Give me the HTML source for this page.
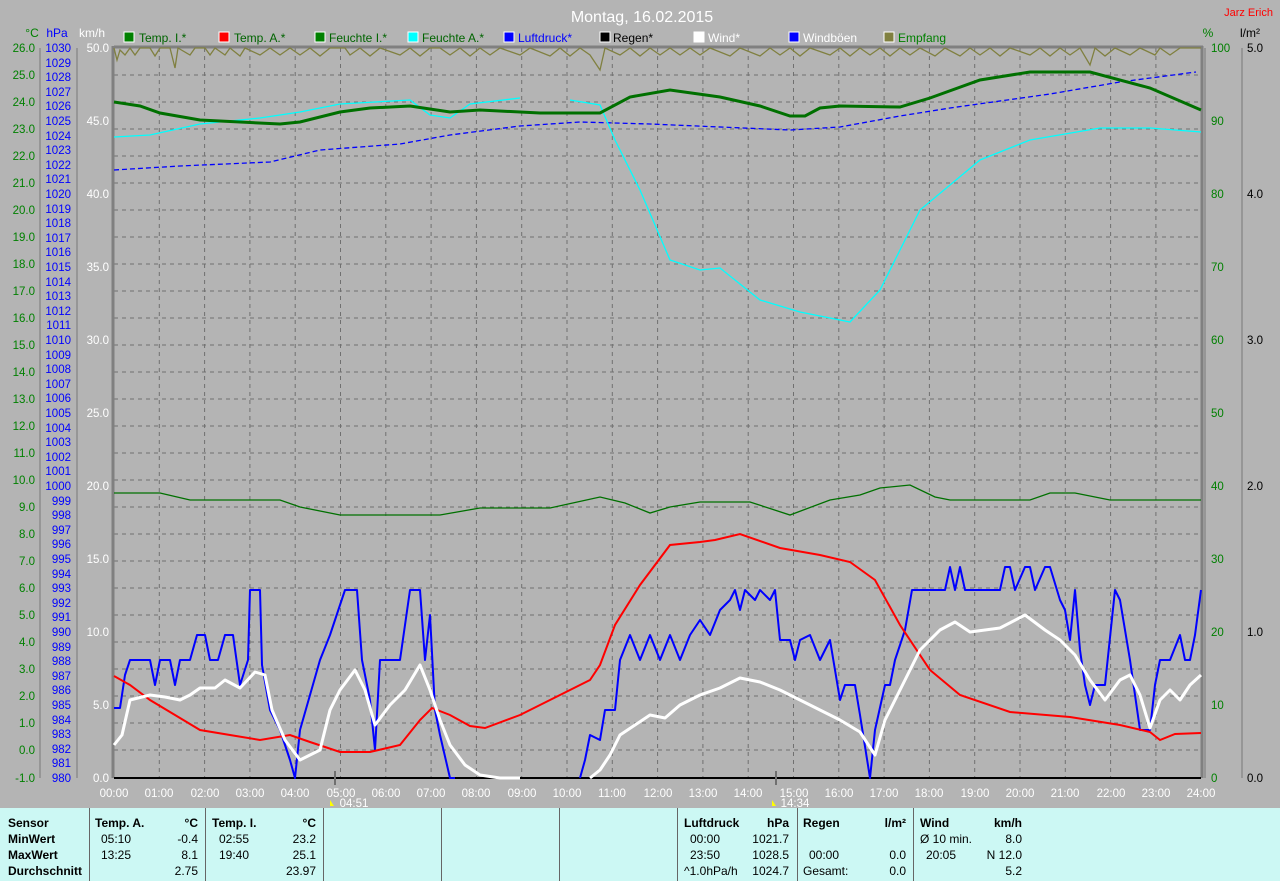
<!DOCTYPE html>
<html><head><meta charset="utf-8"><style>
html,body{margin:0;padding:0;background:#b4b4b4;}
body{width:1280px;height:881px;overflow:hidden;position:relative;font-family:"Liberation Sans",sans-serif;}
svg{position:absolute;left:0;top:0;}
.panel{position:absolute;left:0;top:808px;width:1280px;height:73px;background:#ccf8f4;}
.c{position:absolute;font-size:12px;color:#000;white-space:nowrap;}
.b{font-weight:bold;}
.r{text-align:right;}
.d{position:absolute;top:0;width:1px;height:73px;background:#666;}
</style></head><body>
<svg width="1280" height="808" xmlns="http://www.w3.org/2000/svg" font-family="Liberation Sans, sans-serif">
<text x="642" y="22" font-size="16" fill="#fff" text-anchor="middle">Montag, 16.02.2015</text>
<text x="1273" y="16" font-size="11" fill="#f00" text-anchor="end">Jarz Erich</text>
<g font-size="12">
<rect x="124" y="32" width="10" height="10" fill="#008000" stroke="#fff"/><text x="139" y="42" fill="#006400">Temp. I.*</text>
<rect x="219" y="32" width="10" height="10" fill="#f00" stroke="#fff"/><text x="234" y="42" fill="#006400">Temp. A.*</text>
<rect x="315" y="32" width="10" height="10" fill="#008000" stroke="#fff"/><text x="329" y="42" fill="#006400">Feuchte I.*</text>
<rect x="408" y="32" width="10" height="10" fill="#0ff" stroke="#fff"/><text x="422" y="42" fill="#006400">Feuchte A.*</text>
<rect x="504" y="32" width="10" height="10" fill="#00f" stroke="#fff"/><text x="518" y="42" fill="#00f">Luftdruck*</text>
<rect x="600" y="32" width="10" height="10" fill="#000" stroke="#fff"/><text x="613" y="42" fill="#000">Regen*</text>
<rect x="694" y="32" width="10" height="10" fill="#fff" stroke="#fff"/><text x="708" y="42" fill="#fff">Wind*</text>
<rect x="789" y="32" width="10" height="10" fill="#00f" stroke="#fff"/><text x="803" y="42" fill="#fff">Windböen</text>
<rect x="884" y="32" width="10" height="10" fill="#808040" stroke="#fff"/><text x="898" y="42" fill="#008000">Empfang</text>
</g>
<g font-size="12">
<text x="32" y="37" fill="#008000" text-anchor="middle">°C</text>
<text x="57" y="37" fill="#00f" text-anchor="middle">hPa</text>
<text x="92" y="37" fill="#fff" text-anchor="middle">km/h</text>
<text x="1208" y="37" fill="#008000" text-anchor="middle">%</text>
<text x="1250" y="37" fill="#000" text-anchor="middle">l/m²</text>
</g>
<!-- grid -->
<g stroke="#707070" stroke-dasharray="4,4" stroke-width="1">
<path d="M114 75H1201M114 102H1201M114 129H1201M114 156H1201M114 183H1201M114 210H1201M114 237H1201M114 264H1201M114 291H1201M114 318H1201M114 345H1201M114 372H1201M114 399H1201M114 426H1201M114 453H1201M114 480H1201M114 507H1201M114 534H1201M114 561H1201M114 588H1201M114 615H1201M114 642H1201M114 669H1201M114 696H1201M114 723H1201M114 750H1201"/>
<path d="M159.3 48V778M204.6 48V778M249.9 48V778M295.2 48V778M340.5 48V778M385.8 48V778M431.1 48V778M476.4 48V778M521.7 48V778M567 48V778M612.3 48V778M657.6 48V778M702.9 48V778M748.2 48V778M793.5 48V778M838.8 48V778M884.1 48V778M929.4 48V778M974.7 48V778M1020 48V778M1065.3 48V778M1110.6 48V778M1155.9 48V778"/>
</g>
<!-- axes -->
<path d="M40 48V778M77 48V778M1205 48V778M1242 48V778" stroke="#777" fill="none"/>
<path d="M113 46V778M114 47H1203M1202 46V778" stroke="#808080" stroke-width="3" fill="none"/>
<path d="M114 778H1201" stroke="#000" stroke-width="2"/>
<path d="M335 771V785M776 771V785" stroke="#707070" stroke-width="2"/>
<!-- left °C ticks & labels -->
<g font-size="11.5" fill="#008000" text-anchor="end">
<text x="35" y="52">26.0</text><text x="35" y="79">25.0</text><text x="35" y="106">24.0</text><text x="35" y="133">23.0</text><text x="35" y="160">22.0</text><text x="35" y="187">21.0</text><text x="35" y="214">20.0</text><text x="35" y="241">19.0</text><text x="35" y="268">18.0</text><text x="35" y="295">17.0</text><text x="35" y="322">16.0</text><text x="35" y="349">15.0</text><text x="35" y="376">14.0</text><text x="35" y="403">13.0</text><text x="35" y="430">12.0</text><text x="35" y="457">11.0</text><text x="35" y="484">10.0</text><text x="35" y="511">9.0</text><text x="35" y="538">8.0</text><text x="35" y="565">7.0</text><text x="35" y="592">6.0</text><text x="35" y="619">5.0</text><text x="35" y="646">4.0</text><text x="35" y="673">3.0</text><text x="35" y="700">2.0</text><text x="35" y="727">1.0</text><text x="35" y="754">0.0</text><text x="35" y="782">-1.0</text>
</g>
<g font-size="11.5" fill="#00f" text-anchor="end">
<text x="71" y="52">1030</text><text x="71" y="67">1029</text><text x="71" y="81">1028</text><text x="71" y="96">1027</text><text x="71" y="110">1026</text><text x="71" y="125">1025</text><text x="71" y="140">1024</text><text x="71" y="154">1023</text><text x="71" y="169">1022</text><text x="71" y="183">1021</text><text x="71" y="198">1020</text><text x="71" y="213">1019</text><text x="71" y="227">1018</text><text x="71" y="242">1017</text><text x="71" y="256">1016</text><text x="71" y="271">1015</text><text x="71" y="286">1014</text><text x="71" y="300">1013</text><text x="71" y="315">1012</text><text x="71" y="329">1011</text><text x="71" y="344">1010</text><text x="71" y="359">1009</text><text x="71" y="373">1008</text><text x="71" y="388">1007</text><text x="71" y="402">1006</text><text x="71" y="417">1005</text><text x="71" y="432">1004</text><text x="71" y="446">1003</text><text x="71" y="461">1002</text><text x="71" y="475">1001</text><text x="71" y="490">1000</text><text x="71" y="505">999</text><text x="71" y="519">998</text><text x="71" y="534">997</text><text x="71" y="548">996</text><text x="71" y="563">995</text><text x="71" y="578">994</text><text x="71" y="592">993</text><text x="71" y="607">992</text><text x="71" y="621">991</text><text x="71" y="636">990</text><text x="71" y="651">989</text><text x="71" y="665">988</text><text x="71" y="680">987</text><text x="71" y="694">986</text><text x="71" y="709">985</text><text x="71" y="724">984</text><text x="71" y="738">983</text><text x="71" y="753">982</text><text x="71" y="767">981</text><text x="71" y="782">980</text>
</g>
<g font-size="11.5" fill="#fff" text-anchor="end">
<text x="109" y="52">50.0</text><text x="109" y="125">45.0</text><text x="109" y="198">40.0</text><text x="109" y="271">35.0</text><text x="109" y="344">30.0</text><text x="109" y="417">25.0</text><text x="109" y="490">20.0</text><text x="109" y="563">15.0</text><text x="109" y="636">10.0</text><text x="109" y="709">5.0</text><text x="109" y="782">0.0</text>
</g>
<g font-size="11.5" fill="#008000">
<text x="1211" y="52">100</text><text x="1211" y="125">90</text><text x="1211" y="198">80</text><text x="1211" y="271">70</text><text x="1211" y="344">60</text><text x="1211" y="417">50</text><text x="1211" y="490">40</text><text x="1211" y="563">30</text><text x="1211" y="636">20</text><text x="1211" y="709">10</text><text x="1211" y="782">0</text>
</g>
<g font-size="11.5" fill="#000">
<text x="1247" y="52">5.0</text><text x="1247" y="198">4.0</text><text x="1247" y="344">3.0</text><text x="1247" y="490">2.0</text><text x="1247" y="636">1.0</text><text x="1247" y="782">0.0</text>
</g>
<g font-size="11.5" fill="#fff" text-anchor="middle">
<text x="114" y="797">00:00</text><text x="159" y="797">01:00</text><text x="205" y="797">02:00</text><text x="250" y="797">03:00</text><text x="295" y="797">04:00</text><text x="341" y="797">05:00</text><text x="386" y="797">06:00</text><text x="431" y="797">07:00</text><text x="476" y="797">08:00</text><text x="522" y="797">09:00</text><text x="567" y="797">10:00</text><text x="612" y="797">11:00</text><text x="658" y="797">12:00</text><text x="703" y="797">13:00</text><text x="748" y="797">14:00</text><text x="794" y="797">15:00</text><text x="839" y="797">16:00</text><text x="884" y="797">17:00</text><text x="929" y="797">18:00</text><text x="975" y="797">19:00</text><text x="1020" y="797">20:00</text><text x="1065" y="797">21:00</text><text x="1111" y="797">22:00</text><text x="1156" y="797">23:00</text><text x="1201" y="797">24:00</text>
<text x="354" y="807">04:51</text><text x="795" y="807">14:34</text>
</g>
<path d="M330 800l4 6h-4z" fill="#ff0"/><path d="M772 800l4 6h-4z" fill="#ff0"/>
<!-- Empfang -->
<polyline fill="none" stroke="#808040" stroke-width="1.3" points="114,48 117,60 120,50 125,55 130,48 135,55 140,48 150,48 155,56 160,48 170,48 175,68 178,48 190,55 195,48 205,48 210,55 215,48 225,55 230,48 240,56 245,48 260,55 270,48 280,55 290,48 300,55 310,48 320,56 330,48 345,48 350,55 360,48 370,56 380,48 400,55 410,48 420,56 430,48 440,48 450,55 460,48 470,56 480,48 490,55 500,48 520,55 530,48 550,56 560,48 570,56 580,48 590,55 600,70 605,48 620,55 630,48 640,56 650,48 660,55 670,48 680,55 690,48 700,55 710,48 730,56 740,48 760,56 770,48 780,55 790,48 800,56 810,48 830,55 840,48 850,56 860,48 870,55 880,48 890,56 900,48 910,55 920,48 935,56 945,48 960,56 970,48 980,55 990,48 1000,56 1010,48 1030,55 1040,48 1050,56 1060,48 1070,55 1080,48 1090,65 1095,48 1105,56 1115,48 1130,55 1140,48 1155,55 1160,48 1170,55 1180,48 1201,48"/>
<!-- Luftdruck -->
<polyline fill="none" stroke="#00f" stroke-width="1.3" stroke-dasharray="5,3" points="114,170 180,166 270,162 320,150 400,144 450,135 520,126 580,122 650,124 790,130 840,127 900,116 950,108 1050,94 1120,82 1196,72"/>
<!-- Feuchte A -->
<polyline fill="none" stroke="#0ff" stroke-width="1.3" points="114,137 150,135 200,124 260,118 300,112 340,104 410,100 430,115 450,118 470,104 520,98"/>
<polyline fill="none" stroke="#0ff" stroke-width="1.3" points="570,100 600,105 615,140 640,190 670,260 700,270 720,268 760,300 800,312 850,322 880,290 920,210 980,160 1030,140 1100,128 1150,128 1201,132"/>
<!-- Temp I -->
<polyline fill="none" stroke="#007000" stroke-width="3" points="114,102 140,106 160,113 200,120 240,122 280,124 300,122 340,112 370,108 410,106 450,112 480,110 540,113 600,113 630,97 670,90 720,97 760,106 790,116 805,116 820,108 840,106 900,107 930,98 980,80 1030,72 1090,72 1150,88 1201,110"/>
<!-- Feuchte I -->
<polyline fill="none" stroke="#007000" stroke-width="1.3" points="114,493 160,493 190,500 280,500 300,507 340,515 440,515 480,508 550,508 600,497 625,503 650,513 670,507 700,502 750,502 790,515 830,500 860,495 880,488 910,485 935,497 950,500 1030,500 1050,493 1075,493 1110,500 1201,500"/>
<!-- Windböen -->
<polyline fill="none" stroke="#00f" stroke-width="2" stroke-linejoin="round" points="114,708 120,708 125,675 130,660 150,660 155,685 160,660 170,660 175,685 180,660 190,660 197,635 205,635 210,660 218,660 225,635 233,635 240,685 248,660 250,590 260,590 262,665 270,710 280,730 290,760 295,778 300,730 320,660 330,635 345,590 357,590 362,660 370,700 375,750 380,660 390,660 400,660 410,590 420,590 425,660 430,615 435,710 440,735 450,778 455,778"/>
<polyline fill="none" stroke="#00f" stroke-width="2" stroke-linejoin="round" points="580,778 585,760 590,735 600,740 605,710 615,710 620,660 630,635 640,660 650,635 660,660 670,635 680,660 690,635 700,620 710,635 720,610 730,600 735,590 740,610 745,590 755,600 760,590 770,600 775,590 780,640 790,640 795,660 800,640 810,635 820,660 830,640 840,700 845,685 855,685 860,715 870,778 875,730 885,685 890,685 895,660 905,630 912,590 945,590 950,567 955,590 960,567 965,590 1000,590 1005,567 1010,567 1015,590 1025,567 1030,567 1035,590 1045,567 1050,567 1060,600 1065,610 1070,640 1075,590 1080,650 1085,685 1090,705 1095,685 1105,685 1115,590 1120,600 1130,660 1140,730 1150,730 1155,685 1160,660 1170,660 1180,635 1185,660 1190,660 1195,635 1201,590"/>
<!-- Temp A -->
<polyline fill="none" stroke="#f00" stroke-width="2" points="114,676 130,685 150,700 175,715 200,730 230,735 260,740 290,735 310,742 340,752 370,752 400,745 420,720 432,708 450,715 470,726 485,728 520,715 560,695 590,680 600,665 615,625 640,585 670,545 700,542 715,540 740,534 780,548 820,555 850,562 875,580 900,625 930,670 960,695 1010,712 1070,717 1120,725 1150,732 1160,740 1175,734 1201,733"/>
<!-- Wind -->
<polyline fill="none" stroke="#fff" stroke-width="3" stroke-linejoin="round" points="114,745 122,735 130,700 150,695 165,697 180,700 190,695 200,688 215,688 225,680 240,688 255,672 265,675 272,710 285,740 300,760 320,750 330,710 340,690 355,670 365,690 375,725 390,705 405,690 420,665 430,690 440,720 450,745 465,765 480,775 500,778 520,778"/>
<polyline fill="none" stroke="#fff" stroke-width="3" stroke-linejoin="round" points="590,778 600,770 610,755 620,735 635,725 650,715 665,718 680,705 700,695 720,688 740,678 760,682 780,690 800,700 820,710 840,720 860,732 875,755 885,720 900,690 920,650 940,630 955,622 970,632 985,630 1000,628 1025,615 1045,630 1060,640 1075,655 1090,680 1105,700 1120,680 1130,675 1140,695 1150,728 1160,700 1170,690 1180,700 1190,685 1201,675"/>
</svg>
<div class="panel">
<div class="d" style="left:89px"></div><div class="d" style="left:205px"></div><div class="d" style="left:323px"></div><div class="d" style="left:441px"></div><div class="d" style="left:559px"></div><div class="d" style="left:677px"></div><div class="d" style="left:797px"></div><div class="d" style="left:913px"></div>
<div class="c b" style="left:8px;top:8px">Sensor</div>
<div class="c b" style="left:8px;top:24px">MinWert</div>
<div class="c b" style="left:8px;top:40px">MaxWert</div>
<div class="c b" style="left:8px;top:56px">Durchschnitt</div>
<div class="c b" style="left:95px;top:8px">Temp. A.</div><div class="c b r" style="left:160px;width:38px;top:8px">°C</div>
<div class="c" style="left:101px;top:24px">05:10</div><div class="c r" style="left:150px;width:48px;top:24px">-0.4</div>
<div class="c" style="left:101px;top:40px">13:25</div><div class="c r" style="left:150px;width:48px;top:40px">8.1</div>
<div class="c r" style="left:150px;width:48px;top:56px">2.75</div>
<div class="c b" style="left:212px;top:8px">Temp. I.</div><div class="c b r" style="left:277px;width:39px;top:8px">°C</div>
<div class="c" style="left:219px;top:24px">02:55</div><div class="c r" style="left:267px;width:49px;top:24px">23.2</div>
<div class="c" style="left:219px;top:40px">19:40</div><div class="c r" style="left:267px;width:49px;top:40px">25.1</div>
<div class="c r" style="left:267px;width:49px;top:56px">23.97</div>
<div class="c b" style="left:684px;top:8px">Luftdruck</div><div class="c b r" style="left:750px;width:39px;top:8px">hPa</div>
<div class="c" style="left:690px;top:24px">00:00</div><div class="c r" style="left:740px;width:49px;top:24px">1021.7</div>
<div class="c" style="left:690px;top:40px">23:50</div><div class="c r" style="left:740px;width:49px;top:40px">1028.5</div>
<div class="c" style="left:684px;top:56px">^1.0hPa/h</div><div class="c r" style="left:740px;width:49px;top:56px">1024.7</div>
<div class="c b" style="left:803px;top:8px">Regen</div><div class="c b r" style="left:870px;width:36px;top:8px">l/m²</div>
<div class="c" style="left:809px;top:40px">00:00</div><div class="c r" style="left:860px;width:46px;top:40px">0.0</div>
<div class="c" style="left:803px;top:56px">Gesamt:</div><div class="c r" style="left:860px;width:46px;top:56px">0.0</div>
<div class="c b" style="left:920px;top:8px">Wind</div><div class="c b r" style="left:980px;width:42px;top:8px">km/h</div>
<div class="c" style="left:920px;top:24px">Ø 10 min.</div><div class="c r" style="left:970px;width:52px;top:24px">8.0</div>
<div class="c" style="left:926px;top:40px">20:05</div><div class="c r" style="left:970px;width:52px;top:40px">N 12.0</div>
<div class="c r" style="left:970px;width:52px;top:56px">5.2</div>
</div>
</body></html>
